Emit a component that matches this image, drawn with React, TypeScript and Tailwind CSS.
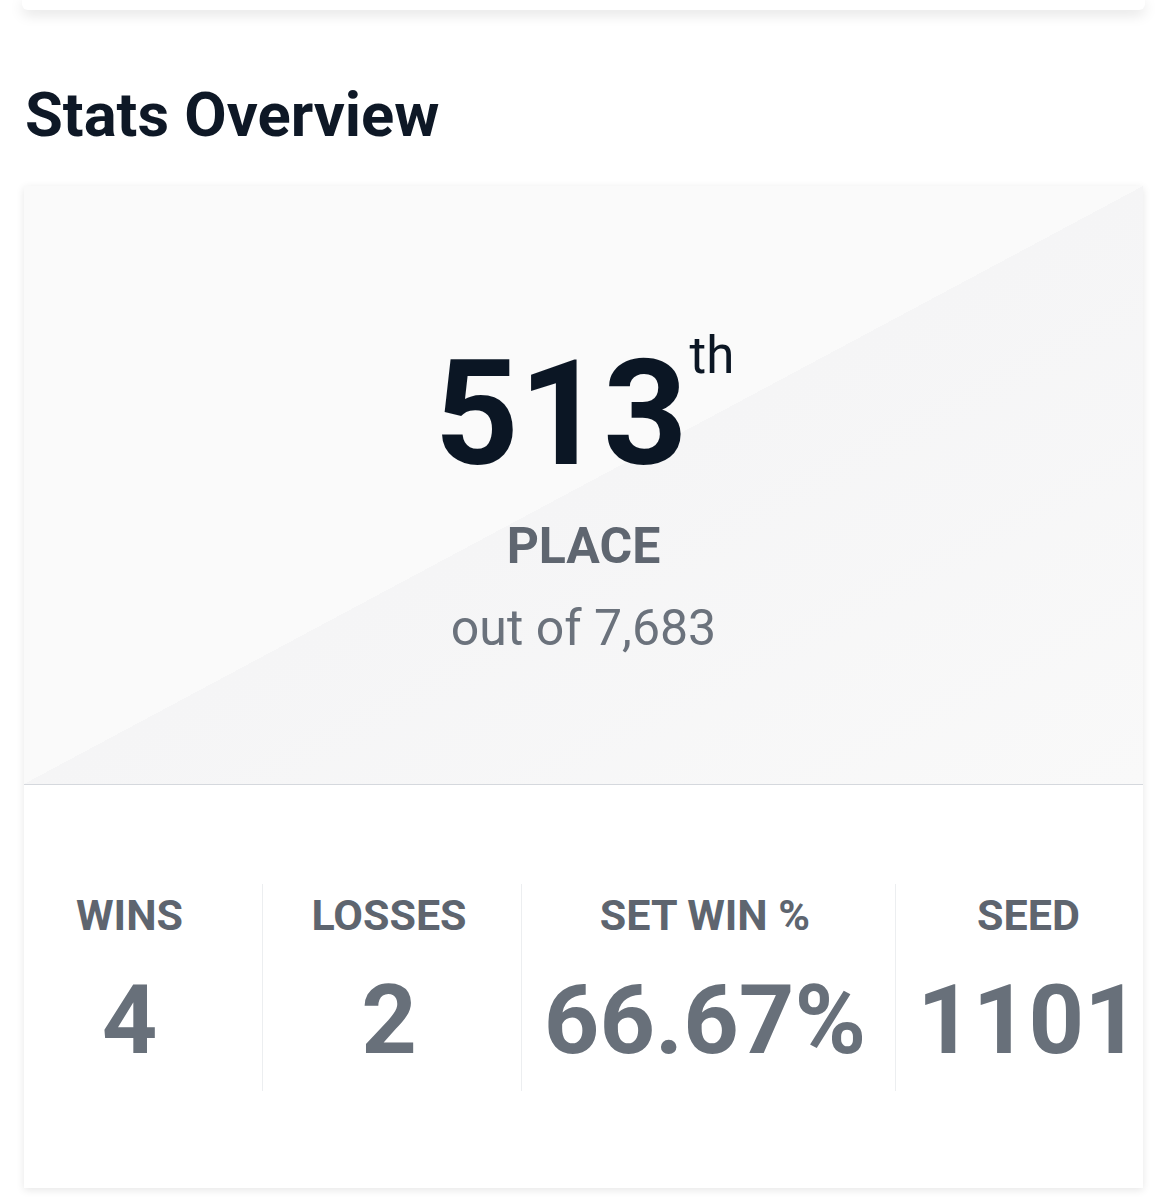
import { FC } from "react";

type Stat = {
  label: string;
  value: string;
  cls: string;
};

const stats: Stat[] = [
  { label: "WINS", value: "4", cls: "w-[238px] pr-[27px]" },
  { label: "LOSSES", value: "2", cls: "w-[259px] pr-[6px] border-l border-[#eceef0]" },
  { label: "SET WIN %", value: "66.67%", cls: "w-[374px] pr-[7px] border-l border-[#eceef0]" },
  { label: "SEED", value: "1101", cls: "w-[266px] border-l border-[#eceef0]" },
];

const StatCell: FC<Stat> = ({ label, value, cls }) => (
  <div className={`flex shrink-0 flex-col items-center pt-[5px] pb-[22px] ${cls}`}>
    <span className="text-[43px] font-bold leading-[53px] text-[#5e656f]">{label}</span>
    <span className="mt-[30px] text-[97px] font-bold leading-none whitespace-nowrap text-[#68707a]">{value}</span>
  </div>
);

const App: FC = () => {
  return (
    <div className="min-h-[1200px] bg-white font-['Roboto',sans-serif] antialiased">
      {/* tail of the card above */}
      <div className="mx-[22px] h-[10px] rounded-b-md bg-white shadow-[0_4px_14px_rgba(0,0,0,0.13)]" />

      <h2 className="ml-[25px] mt-[69px] text-[61.5px] font-bold leading-[72px] text-[#0e1826]">Stats Overview</h2>

      <div className="ml-[24px] mt-[35px] w-[1119px] overflow-hidden bg-white shadow-[0_2px_8px_rgba(0,0,0,0.10)]">
        <div className="flex h-[598px] flex-col items-center bg-[linear-gradient(to_bottom_right,#fafafa_50%,#f5f5f6_50%,#f9f9f9)] pt-[155px]">
          <div className="flex items-start pl-[2px]">
            <span className="text-[147px] font-bold leading-none text-[#0b1624]">513</span>
            <span className="-mt-[11px] ml-[2px] text-[51px] leading-none text-[#0b1624]">th</span>
          </div>
          <span className="mt-[33px] text-[50px] font-bold leading-none text-[#5f6670]">PLACE</span>
          <span className="mt-[32px] text-[50px] leading-none text-[#6b727c]">out of 7,683</span>
        </div>

        <div className="border-t border-[#d5d8dd] pt-[99px] pb-[97px]">
          <div className="flex">
            {stats.map((s) => (
              <StatCell key={s.label} {...s} />
            ))}
          </div>
        </div>
      </div>
    </div>
  );
};

export default App;
